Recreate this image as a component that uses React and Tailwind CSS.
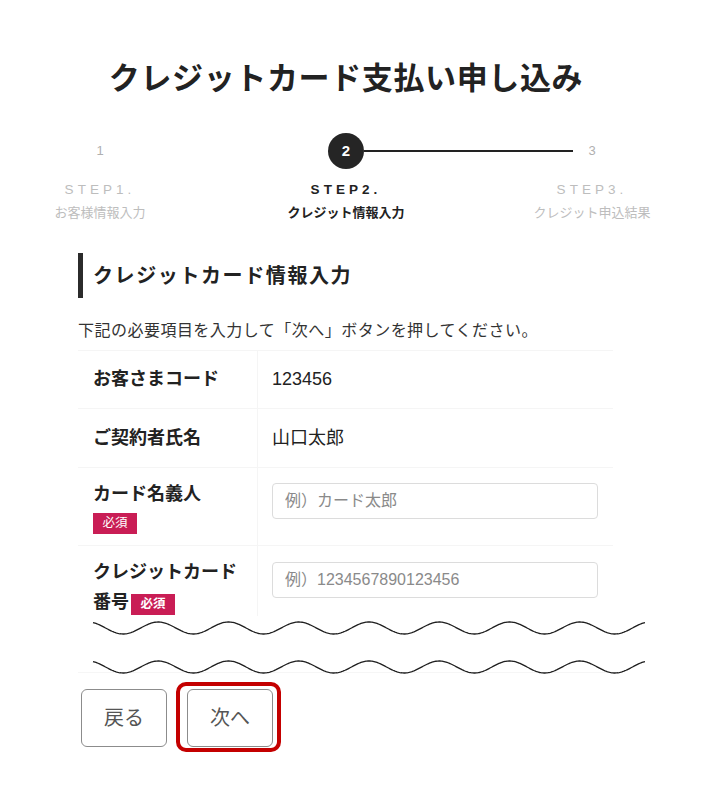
import React from "react";

const STEPS = [
  { num: "1", step: "STEP1.", label: "お客様情報入力" },
  { num: "2", step: "STEP2.", label: "クレジット情報入力", active: true },
  { num: "3", step: "STEP3.", label: "クレジット申込結果" },
];

// wavy "cut" line, drawn in local coords (x=0 is page x 93)
function wavePath(cy) {
  let d = "";
  for (let x = 0; x <= 552; x += 1) {
    const y = cy - 6 * Math.cos((2 * Math.PI * (x + 93 - 88)) / 70.25);
    d += `${x === 0 ? "M" : "L"}${x} ${y.toFixed(2)} `;
  }
  return d;
}

function Badge() {
  return (
    <span className="inline-flex h-[21px] w-[44px] items-center justify-center bg-[#c91d55] text-[12.5px] leading-none text-white">
      必須
    </span>
  );
}

function Stepper() {
  return (
    <div className="-ml-[23px] mt-[35px] grid w-[738px] grid-cols-3">
      {STEPS.map((s) => (
        <div key={s.num} className="flex flex-col items-center">
          <div className="relative flex h-[36px] w-full items-center justify-center">
            {s.active ? (
              <>
                <div className="flex h-[36px] w-[36px] items-center justify-center rounded-full bg-[#252525] text-[15px] font-bold text-white">
                  {s.num}
                </div>
                <div className="absolute left-[141px] top-[17px] h-[2px] w-[209px] bg-[#222]" />
              </>
            ) : (
              <div className="flex h-[36px] w-[36px] items-center justify-center text-[13px] text-[#b0b0b0]">
                {s.num}
              </div>
            )}
          </div>
          <div
            className={`mt-[12px] text-[13.5px] leading-[18px] tracking-[0.3em] ${
              s.active ? "font-bold text-[#222]" : "text-[#bdbdbd]"
            }`}
          >
            {s.step}
          </div>
          <div
            className={`mt-[5px] text-[13px] leading-[18px] ${
              s.active ? "font-bold text-[#222]" : "text-[#bdbdbd]"
            }`}
          >
            {s.label}
          </div>
        </div>
      ))}
    </div>
  );
}

function Row({ label, children, className = "" }) {
  return (
    <div className={`flex border-b border-[#f5f5f5] ${className}`}>
      <div className="w-[180px] shrink-0 border-r border-[#f5f5f5] pl-[15px]">{label}</div>
      <div className="flex-1 pl-[14px] pr-[15px]">{children}</div>
    </div>
  );
}

export default function App() {
  return (
    <div className="min-h-screen w-full overflow-hidden bg-white font-['Liberation_Sans','Noto_Sans_CJK_JP',sans-serif] text-[#222]">
      <div className="w-[692px] pb-[40px]">
        <h1 className="pt-[60px] text-center text-[31px] font-bold leading-[38px] tracking-[0.02em] text-[#222]">
          クレジットカード支払い申し込み
        </h1>

        <Stepper />

        <div className="ml-[78px] w-[535px]">
          <h2 className="mt-[31px] flex h-[45px] items-center border-l-[5px] border-[#2b2b2b] pl-[10px] text-[20px] font-bold tracking-[0.08em]">
            クレジットカード情報入力
          </h2>

          <p className="mt-[22px] text-[16px] leading-[22px] tracking-[0.03em] text-[#333]">
            下記の必要項目を入力して「次へ」ボタンを押してください。
          </p>

          <div className="mt-[8px] border-t border-[#f5f5f5]">
            <Row
              className="h-[58px] items-stretch"
              label={<div className="flex h-full items-center text-[18px] font-bold">お客さまコード</div>}
            >
              <div className="flex h-full items-center text-[18px]">123456</div>
            </Row>
            <Row
              className="h-[59px]"
              label={<div className="flex h-full items-center text-[18px] font-bold">ご契約者氏名</div>}
            >
              <div className="flex h-full items-center text-[18px]">山口太郎</div>
            </Row>
            <Row
              className="h-[78px]"
              label={
                <div className="pt-[12px]">
                  <div className="text-[18px] font-bold leading-[28px]">カード名義人</div>
                  <div className="mt-[5px] flex">
                    <Badge />
                  </div>
                </div>
              }
            >
              <input
                placeholder="例）カード太郎"
                className="mt-[15px] h-[36px] w-full rounded-[4px] border border-[#dcdcdc] px-[12px] text-[16px] outline-none placeholder:text-[#8a8a8a]"
              />
            </Row>
            <div className="flex h-[70px] overflow-hidden">
              <div className="w-[180px] shrink-0 border-r border-[#f5f5f5] pl-[15px] pt-[11px]">
                <div className="text-[18px] font-bold leading-[30px]">クレジットカード</div>
                <div className="flex items-center text-[18px] font-bold leading-[30px]">
                  番号
                  <span className="ml-[2px]">
                    <Badge />
                  </span>
                </div>
              </div>
              <div className="flex-1 pl-[14px] pr-[15px]">
                <input
                  placeholder="例）1234567890123456"
                  className="mt-[16px] h-[36px] w-full rounded-[4px] border border-[#dcdcdc] px-[12px] text-[16px] outline-none placeholder:text-[#8a8a8a]"
                />
              </div>
            </div>
          </div>

          <div className="h-[56px] border-b border-[#f6f6f6]">
            <svg width="552" height="60" viewBox="0 0 552 60" className="ml-[15px] mt-[1px] overflow-visible">
              <path d={wavePath(11)} fill="none" stroke="#1e1e1e" strokeWidth="1.3" />
              <path d={wavePath(50)} fill="none" stroke="#1e1e1e" strokeWidth="1.3" />
            </svg>
          </div>

          <div className="mt-[16px] flex gap-[20px] pl-[3px]">
            <button className="flex h-[58px] w-[86px] items-center justify-center rounded-[6px] border border-[#8c8c8c] bg-white text-[20px] text-[#555]">
              戻る
            </button>
            <div className="relative">
              <button className="flex h-[58px] w-[86px] items-center justify-center rounded-[6px] border border-[#8c8c8c] bg-white text-[20px] text-[#555]">
                次へ
              </button>
              <span className="pointer-events-none absolute -bottom-[5px] -left-[11px] -right-[8px] -top-[7px] rounded-[10px] border-[4.5px] border-[#c40000]" />
            </div>
          </div>
        </div>
      </div>
    </div>
  );
}
